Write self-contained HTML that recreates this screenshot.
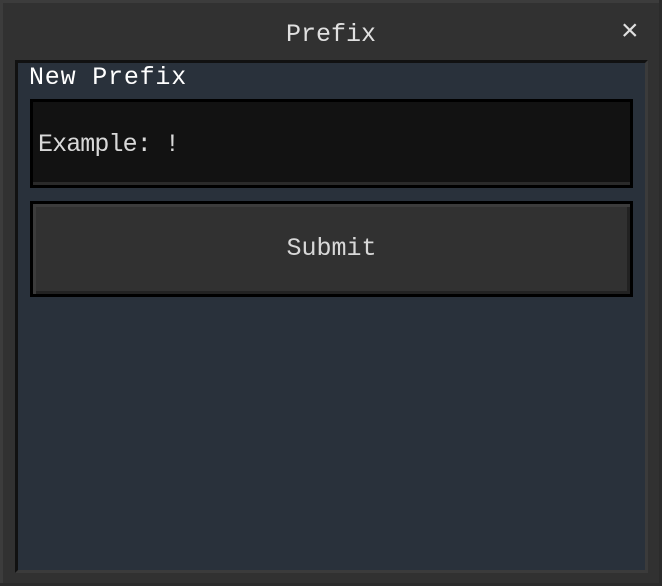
<!DOCTYPE html>
<html><head><style>
body{margin:0;width:662px;height:586px;background:#2b2b2b;overflow:hidden;font-family:"Liberation Mono","DejaVu Sans Mono",monospace;}
.win{position:absolute;left:0;top:0;width:659px;height:583px;background:#313131;border-top:3px solid #3c3c3c;border-left:3px solid #3c3c3c;box-sizing:border-box;}
.title{position:absolute;left:0;top:20px;width:662px;text-align:center;color:#e0e0e0;font-size:25px;}
.x{position:absolute;left:621px;top:14px;color:#e0e0e0;font-size:30px;font-family:"Liberation Sans",sans-serif;}
.panel{position:absolute;left:15px;top:60px;width:633px;height:513px;background:#29313b;box-sizing:border-box;border-top:3px solid #111;border-left:3px solid #111;border-right:3px solid #3b3b3b;border-bottom:3px solid #3b3b3b;}
.lbl{position:absolute;left:29px;top:63px;color:#fff;font-size:25px;letter-spacing:0.8px;}
.inp{position:absolute;left:30px;top:99px;width:603px;height:89px;background:#121212;box-sizing:border-box;border:3px solid #000;box-shadow:inset 0 -3px 0 #2a2a2a;}
.inp span{position:absolute;left:5px;top:28px;color:#d8d8d8;font-size:25px;letter-spacing:-0.9px;}
.btn{position:absolute;left:30px;top:201px;width:603px;height:96px;background:#313131;box-sizing:border-box;border:3px solid #000;box-shadow:inset 3px 3px 0 #3c3c3c,inset -3px -3px 0 #222;color:#d8d8d8;font-size:25px;text-align:center;line-height:90px;}
</style></head><body>
<div class="win"></div>
<div class="title">Prefix</div>
<div class="x">×</div>
<div class="panel"></div>
<div class="lbl">New Prefix</div>
<div class="inp"><span>Example: !</span></div>
<div class="btn">Submit</div>
</body></html>
